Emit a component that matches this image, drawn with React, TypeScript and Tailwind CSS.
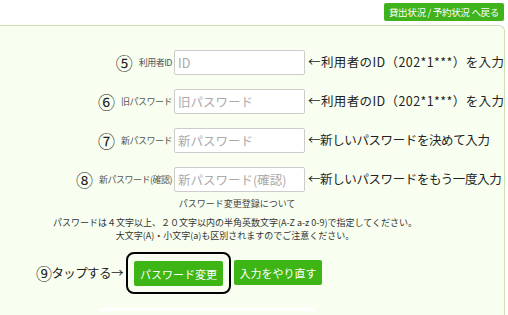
const rows = [
  { no: "⑤", label: "利用者ID", ph: "ID", note: "←利用者のID（202*1***）を入力", wide: true },
  { no: "⑥", label: "旧パスワード", ph: "旧パスワード", note: "←利用者のID（202*1***）を入力", wide: true },
  { no: "⑦", label: "新パスワード", ph: "新パスワード", note: "←新しいパスワードを決めて入力", wide: false },
  { no: "⑧", label: "新パスワード(確認)", ph: "新パスワード(確認)", note: "←新しいパスワードをもう一度入力", wide: false },
]

export default function App() {
  return (
    <div className="w-[508px] h-[315px] overflow-hidden bg-white text-[#222] font-['Noto_Sans_CJK_JP',sans-serif]">
      {/* 戻るボタン */}
      <div className="flex justify-end pt-[3px] pr-[4px]">
        <button className="h-[18px] px-[5px] rounded-[2px] bg-[#3fb21c] text-white text-[9.5px] leading-[18px] tracking-[-0.3px]">
          貸出状況 / 予約状況 へ戻る
        </button>
      </div>

      <div className="mt-[4px] mr-[3px] h-[300px] border-t border-r border-[#cfe0b5] rounded-tr-[6px] bg-[#f8fff0] overflow-hidden">
        <div className="pt-[24px] flex flex-col gap-[14px]">
          {rows.map(r => (
            <div key={r.no} className="flex items-center">
              <div className="w-[172px] shrink-0 flex justify-end items-center gap-[6px]">
                <span className="text-[17px] leading-none">{r.no}</span>
                <span className="text-[9px] text-[#555] tracking-[-0.5px]">{r.label}</span>
              </div>
              <input
                placeholder={r.ph}
                className="shrink-0 ml-[2px] w-[131px] h-[25px] px-[3px] border border-[#cccccc] rounded-[2px] bg-white text-[12.5px] placeholder:text-[#aaaaaa] outline-none"
              />
              <span className={`ml-[3px] text-[12.5px] whitespace-nowrap ${r.wide ? "tracking-[0.4px]" : "tracking-[-0.4px]"}`}>{r.note}</span>
            </div>
          ))}
        </div>

        <p className="w-[474px] mt-[5px] text-center text-[9px] text-[#444]">パスワード変更登録について</p>

        <div className="w-[470px] mt-[5px] text-center text-[9px] leading-[13px] text-[#333]">
          <p>パスワードは４文字以上、２０文字以内の半角英数文字(A-Z a-z 0-9)で指定してください。</p>
          <p>大文字(A)・小文字(a)も区別されますのでご注意ください。</p>
        </div>

        <div className="mt-[10px] flex items-center">
          <span className="ml-[36px] w-[90px] flex items-center text-[12.5px] whitespace-nowrap tracking-[-0.6px]">
            <span className="text-[16px] leading-none">⑨</span>タップする→
          </span>
          <div className="p-[6px] border-2 border-black rounded-[8px]">
            <button className="w-[89px] h-[25px] rounded-[2px] bg-[#3db515] text-white text-[11px]">パスワード変更</button>
          </div>
          <button className="ml-[3px] w-[88px] h-[25px] rounded-[2px] bg-[#3db515] text-white text-[11px]">入力をやり直す</button>
        </div>

        <div className="mt-[14px] ml-[100px] w-[215px] h-[3px] bg-white" />
      </div>
    </div>
  )
}
